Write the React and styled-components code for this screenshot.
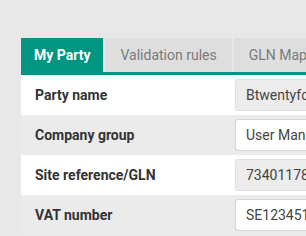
import React from 'react'
import styled, { createGlobalStyle } from 'styled-components'

const GlobalStyle = createGlobalStyle`
  html, body {
    margin: 0;
    padding: 0;
    background: #e8e8e8;
    font-family: Roboto, "Liberation Sans", Arial, sans-serif;
    overflow: hidden;
  }
`

const Page = styled.div`
  padding: 38px 0 0 21px;
  width: 400px;
`

const TabBar = styled.div`
  display: flex;
  gap: 2px;
  border-bottom: 3px solid #009681;
`

const Tab = styled.div`
  height: 34px;
  padding: 0 ${p => (p.$active ? '13px' : '15px')};
  display: flex;
  align-items: center;
  font-size: 14px;
  white-space: nowrap;
  background: ${p => (p.$active ? '#009681' : '#dedede')};
  color: ${p => (p.$active ? '#fff' : '#7a7a7a')};
  font-weight: ${p => (p.$active ? 700 : 400)};
`

const Form = styled.div`
  display: flex;
  flex-direction: column;
`

const Row = styled.div`
  display: grid;
  grid-template-columns: 214px 1fr;
  align-items: center;
  height: 40px;
  background: ${p => (p.$alt ? '#ebebeb' : '#fff')};
`

const Label = styled.div`
  padding-left: 14px;
  font-size: 14px;
  font-weight: 700;
  color: #333;
`

const Input = styled.div`
  height: 32px;
  box-sizing: border-box;
  padding: 0 10px;
  display: flex;
  align-items: center;
  font-size: 14px;
  color: #444;
  white-space: nowrap;
  border: 1px solid ${p => (p.$disabled ? '#e0e0e0' : '#d4d4d4')};
  border-right: none;
  border-radius: 3px 0 0 3px;
  background: ${p => (p.$disabled ? '#ececec' : '#fff')};
`

const rows = [
  { label: 'Party name', value: 'Btwentyfour AB', disabled: true },
  { label: 'Company group', value: 'User Management', disabled: false },
  { label: 'Site reference/GLN', value: '7340117800000', disabled: true },
  { label: 'VAT number', value: 'SE123451234501', disabled: false },
]

const App = () => {
  return (
    <>
      <GlobalStyle />
      <Page>
        <TabBar>
          <Tab $active>My Party</Tab>
          <Tab>Validation rules</Tab>
          <Tab>GLN Mappings</Tab>
        </TabBar>
        <Form>
          {rows.map((r, i) => (
            <Row key={r.label} $alt={i % 2 === 1}>
              <Label>{r.label}</Label>
              <Input $disabled={r.disabled}>{r.value}</Input>
            </Row>
          ))}
        </Form>
      </Page>
    </>
  )
}

export default App
